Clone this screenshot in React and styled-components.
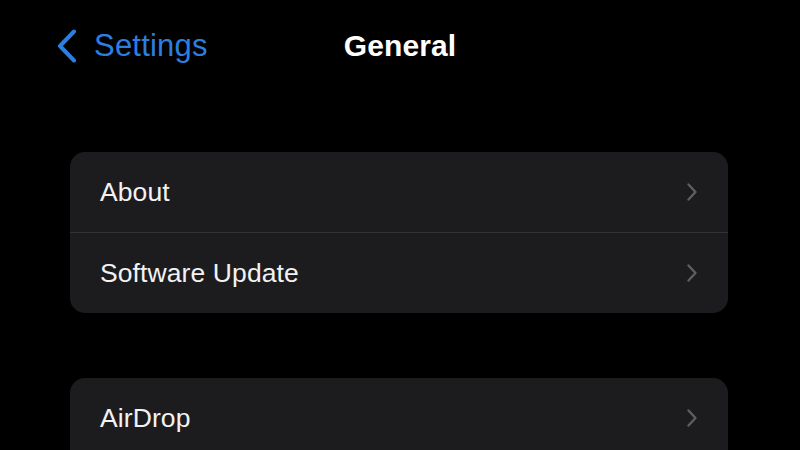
import React from 'react';
import styled, { createGlobalStyle } from 'styled-components';

const GlobalStyle = createGlobalStyle`
  html, body {
    margin: 0;
    padding: 0;
    background: #000;
  }
  body {
    font-family: "Liberation Sans", Arial, sans-serif;
    -webkit-font-smoothing: antialiased;
  }
`;

const Screen = styled.div`
  width: 800px;
  height: 450px;
  overflow: hidden;
  background: #000;
`;

const NavBar = styled.div`
  display: grid;
  grid-template-columns: 1fr auto 1fr;
  align-items: center;
  height: 92px;
  padding: 0 0 0 57px;
  box-sizing: border-box;
`;

const BackButton = styled.div`
  display: flex;
  align-items: center;
  gap: 17px;
  color: #2b7fe0;
  font-size: 31px;
  letter-spacing: 0.2px;
  svg {
    display: block;
  }
`;

const Title = styled.div`
  color: #fff;
  font-size: 30px;
  font-weight: 700;
  letter-spacing: 0.1px;
  margin-left: -57px;
`;

const Content = styled.div`
  display: flex;
  flex-direction: column;
  gap: 65px;
  padding: 60px 72px 0 70px;
`;

const Group = styled.div`
  background: #1c1c1e;
  border-radius: 15px;
  overflow: hidden;
  padding-bottom: ${({ open }) => (open ? 20 : 0)}px;
`;

const Row = styled.div`
  display: flex;
  align-items: center;
  justify-content: space-between;
  height: 80px;
  padding: 0 30px 0 30px;
  color: #f2f2f4;
  font-size: 26.5px;
  letter-spacing: 0.1px;
  border-top: ${({ divided }) => (divided ? '1px solid #333336' : 'none')};
  svg {
    display: block;
  }
`;

const BackChevron = () => (
  <svg width="20" height="34" viewBox="0 0 20 34">
    <polyline
      points="17,2.5 3,17 17,31.5"
      fill="none"
      stroke="#2b7fe0"
      strokeWidth="4"
      strokeLinecap="round"
      strokeLinejoin="round"
    />
  </svg>
);

const Chevron = () => (
  <svg width="12" height="20" viewBox="0 0 12 20">
    <polyline
      points="2.5,2.5 9.5,10 2.5,17.5"
      fill="none"
      stroke="#5d5d62"
      strokeWidth="2.4"
      strokeLinecap="round"
      strokeLinejoin="round"
    />
  </svg>
);

const groups = [['About', 'Software Update'], ['AirDrop']];

const App = () => (
  <Screen>
    <GlobalStyle />
    <NavBar>
      <BackButton>
        <BackChevron />
        <span>Settings</span>
      </BackButton>
      <Title>General</Title>
      <div />
    </NavBar>
    <Content>
      {groups.map((items, gi) => (
        <Group key={gi} open={gi === groups.length - 1}>
          {items.map((label, i) => (
            <Row key={label} divided={i > 0}>
              <span>{label}</span>
              <Chevron />
            </Row>
          ))}
        </Group>
      ))}
    </Content>
  </Screen>
);

export default App;
